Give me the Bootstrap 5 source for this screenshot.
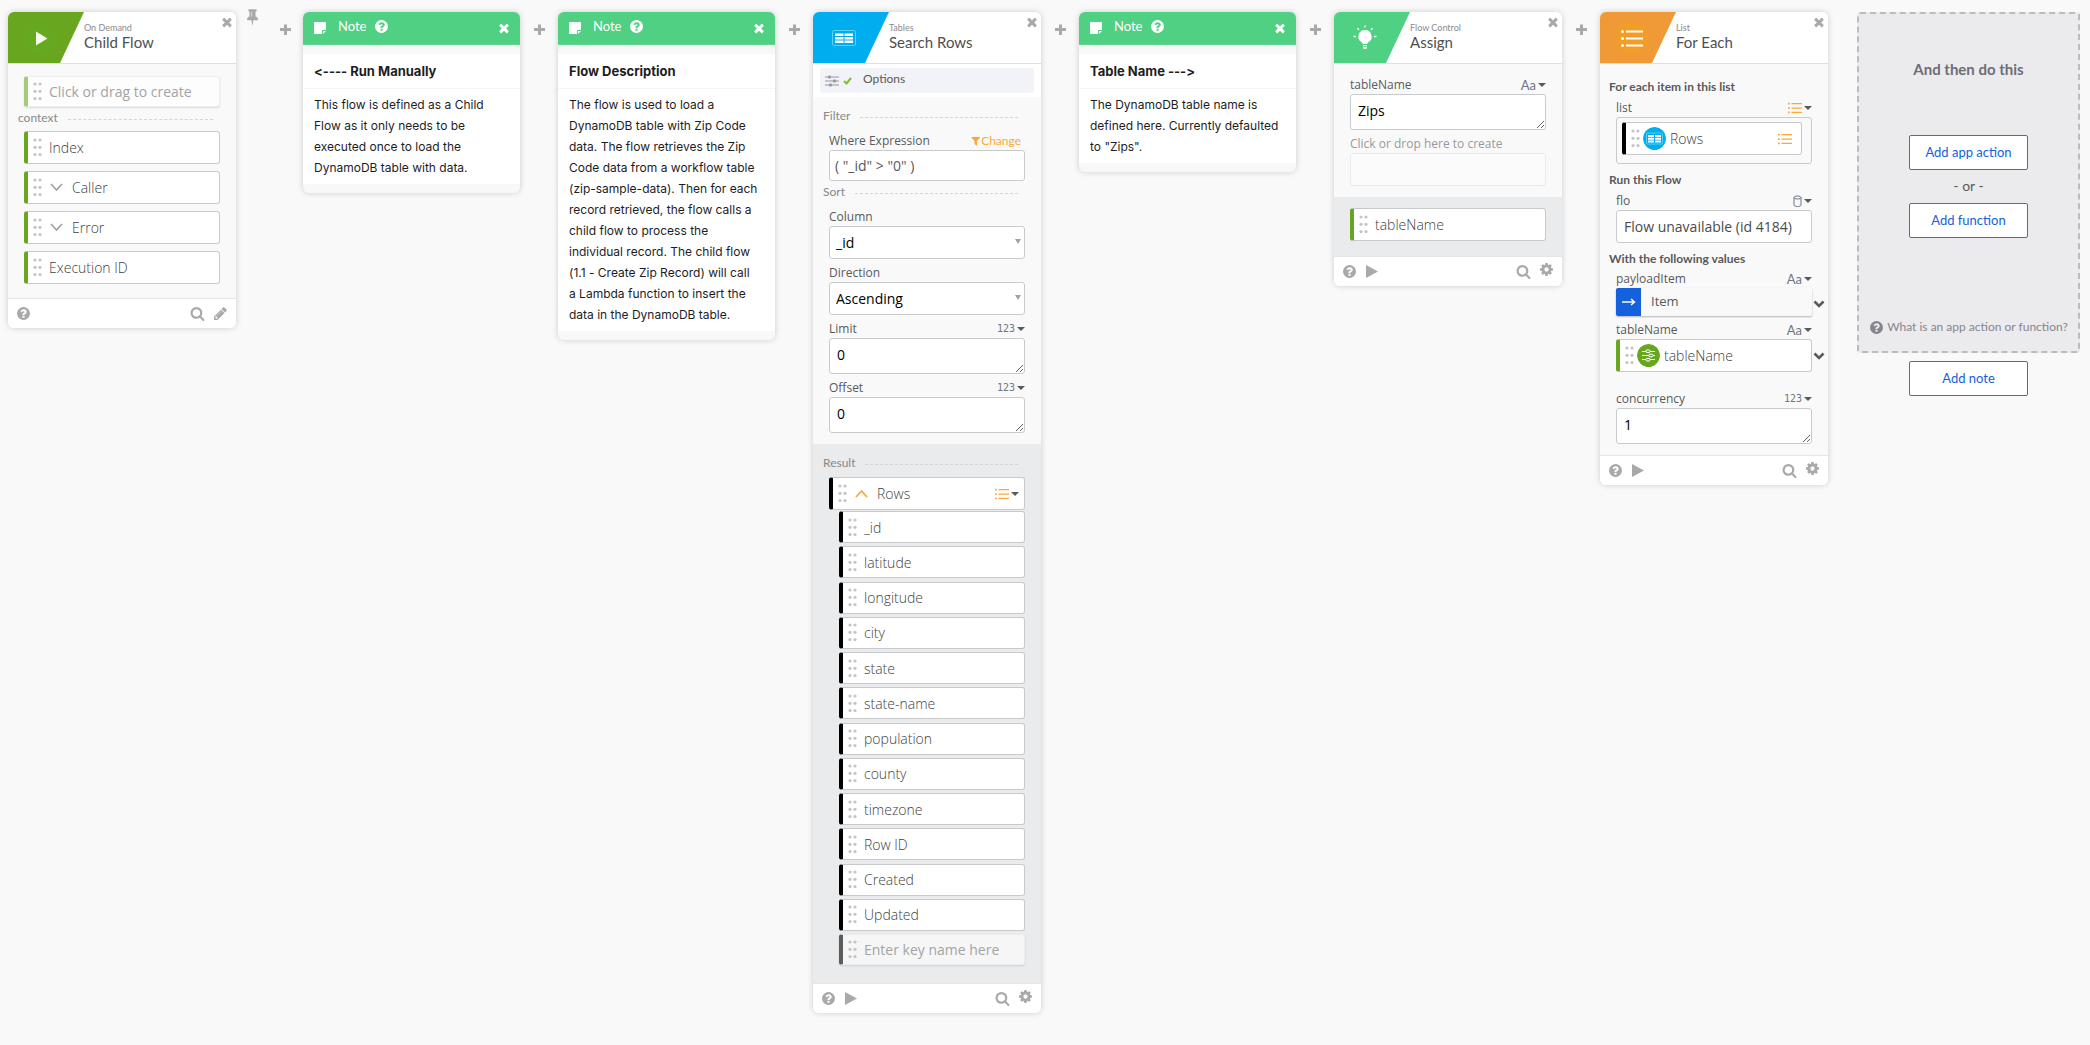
<!DOCTYPE html>
<html lang="en">
<head>
<meta charset="utf-8">
<meta name="viewport" content="width=device-width, initial-scale=1">
<title>Child Flow</title>
<link href="https://cdn.jsdelivr.net/npm/bootstrap@5.3.0/dist/css/bootstrap.min.css" rel="stylesheet">
<style>
:root { --head: Lato, "Open Sans", sans-serif; --text: "Open Sans", "Noto Sans", sans-serif; --note: Inter, "Liberation Sans", sans-serif; }
body { background: #f9f9f9; font-family: var(--text); font-size: 12px; color: #58595b; }
button { font-family: inherit; }
.board { padding: 12px 10px 32px 8px; min-width: 1900px; }
.step-card { flex: 228 1 0; min-width: 0; background: #f9f9f9; border-radius: 6px; box-shadow: 0 0 6px rgba(0,0,0,.18); overflow: hidden; }
.note-card { flex: 217 1 0; min-width: 0; background: #f8f8f8; border-radius: 6px; box-shadow: 0 0 6px rgba(0,0,0,.18); overflow: hidden; font-family: var(--note); font-variant-ligatures: none; font-feature-settings: "calt" 0; color: #1d1d1f; }
.joint { flex: 0 0 38px; padding-top: 10px; }
.joint-wide { flex: 0 0 67px; padding-right: 10px; }
.bare { border: 0; background: none; padding: 0; color: #a9a9a9; line-height: 0; }
.step-head { height: 52px; background: #fff; border-bottom: 1px solid #dedfe0; font-family: var(--head); }
.flag { flex: 0 0 76px; height: 51px; clip-path: polygon(0 0, 100% 0, 52px 100%, 0 100%); padding-right: 6px; }
.flag-green { background: #69a620; } .flag-blue { background: #00aeef; } .flag-mint { background: #4fd082; } .flag-orange { background: #f09a37; }
.names { padding-top: 10px; }
.shut { padding: 3px 2px; }
.kind { font-size: 9px; line-height: 12px; color: #8a8b8d; }
.title { font-size: 15px; line-height: 16px; margin: 0; font-weight: 400; color: #4e4f51; }
.step-foot { height: 30px; background: #fff; border-top: 1px solid #e4e5e6; padding: 0 8px; }
.sect { font-family: var(--head); font-size: 12px; line-height: 16px; color: #88898b; padding: 0 23px 0 10px; gap: 10px; }
.sect::after { content: ""; flex: 1; border-top: 1px dashed #d4d5d6; margin-top: 2px; }
.inset { padding-left: 16px; padding-right: 16px; }
.result { background: #e9ebed; }
.pill { height: 33px; background: #fff; border: 1px solid #c8c9cb; border-left: 4px solid #69a620; border-radius: 3px; font-size: 14px; font-weight: 300; color: #3e3f41; padding: 0 5px; gap: 6px; }
.pill-black { border-left-color: #000; }
.pill-row { height: 32px; }
.keys { height: 455px; padding-top: 1px; margin-left: 10px; }
.pill input { border: 0; background: none; outline: 0; min-width: 0; flex: 1; padding: 0; font: inherit; }
.pill input::placeholder { color: #a3a4a6; opacity: 1; font-weight: 400; }
.pill-new { height: 31px; background: #fdfdfd; border-color: #ededee; border-left-color: #a3cb79; box-shadow: 0 1px 2px rgba(0,0,0,.12); }
.pill-key { background: #f6f6f6; border-left-color: #5c5c5c; }
.dots { width: 10px; height: 19px; fill: #c4c5c7; flex: none; }
.lbl { height: 23px; padding-top: 5px; line-height: 18px; }
.lbl label { color: #58595b; }
.typ { font-family: var(--head); color: #6c7783; font-size: 13px; line-height: 14px; gap: 2px; }
.typ-num { font-family: "DejaVu Sans Mono", monospace; font-size: 10px; }
.typ::after, .pick::after { content: ""; border: 4px solid transparent; border-top-color: #58595b; border-bottom: 0; }
.box { display: block; width: 100%; height: 33px; border: 1px solid #c8cacc; border-radius: 3px; background: #fff; font-size: 14px; line-height: 20px; color: #000; padding: 0 7px; }
textarea.box { height: 36px; padding-top: 6px; resize: vertical; overflow: hidden; }
select.box { appearance: none; padding-left: 6px; }
.pick { position: relative; }
.pick::after { position: absolute; right: 4px; top: 13px; border-width: 5px 3px 0; border-top-color: #a0a1a3; }
.box-expr { height: 31px; color: #58595b; padding-left: 5px; }
.box-gray { color: #4a4b4d; }
.change { font-family: var(--head); font-size: 12px; line-height: 16px; color: #fba73b; }
.opts-wrap { background: #fff; padding: 4px 7px; height: 33px; }
.opts { background: #f1f3f8; border-radius: 3px; height: 25px; padding: 0 5px; width: 100%; font-family: var(--head); font-size: 12px; line-height: 14px; }
.opts span { color: #58595b; padding: 0 0 3px 11px; }
.each { font-family: var(--head); font-weight: 700; font-size: 12px; line-height: 16px; padding: 8px 9px 0; height: 23px; margin: 0; color: #58595b; }
.well { border: 1px solid #c8cacc; border-radius: 3px; height: 47px; padding: 4px 9px 0 5px; }
.disc { width: 23px; height: 23px; border-radius: 50%; flex: none; margin-left: -4px; margin-right: -2px; }
.item { height: 28px; box-shadow: 0 1px 2px rgba(0,0,0,.28); border-radius: 2px; font-size: 13px; background: #f9f9f9; }
.item span { background: #1560dc; width: 25px; height: 28px; border-radius: 2px 0 0 2px; margin-right: 10px; }
.with-more { margin-right: -13px; gap: 1px; }
.note-head { height: 33px; background: #4fd082; border-bottom: 1px solid #62d690; color: #fff; padding: 0 9px 0 11px; font-family: var(--head); font-size: 13px; line-height: 16px; }
.note-title { background: #fff; margin: 9px 0 0; height: 35px; border-bottom: 1px solid #f6f6f6; padding: 0 11px; font-size: 13px; line-height: 34px; font-weight: 700; }
.note-text { background: #fff; margin: 0 0 9px; padding: 5px 13px 6px 11px; font-size: 12px; line-height: 21px; }
.next-col { flex: 223 1 0; min-width: 0; margin-left: 29px; font-family: var(--head); }
.next { height: 341px; border: 2px dashed #bcbcbe; border-radius: 3px; background: #ebebed; padding: 45px 4px 16px; }
.next h2 { font-size: 15px; line-height: 20px; font-weight: 700; color: #6d6d78; margin: 0 0 56px; }
.btn-flow { width: 119px; height: 35px; background: #fff; border: 1px solid #2f72df; border-radius: 2px; color: #1560dc; font-size: 13px; line-height: 16px; padding: 0 0 2px; }
.btn-flow:hover { background: #1560dc; color: #fff; }
.or { font-size: 14px; line-height: 31px; padding-bottom: 2px; }
.ask { font-size: 12px; line-height: 16px; color: #85858f; text-decoration: none; gap: 3px; white-space: nowrap; }
.sym { width: 15px; height: 15px; fill: currentColor; flex: none; display: block; }
.sym-x { width: 14px; height: 14px; } .sym-pin { width: 17px; height: 17px; } .sym-note { width: 12px; height: 12px; }
</style>
<script src="https://cdn.jsdelivr.net/npm/bootstrap@5.3.0/dist/js/bootstrap.bundle.min.js"></script>
</head>
<body>
<svg class="d-none" aria-hidden="true">
<symbol id="i-x" viewBox="0 0 1792 1792"><path d="M1490 1322q0 40-28 68l-136 136q-28 28-68 28t-68-28l-294-294-294 294q-28 28-68 28t-68-28l-136-136q-28-28-28-68t28-68l294-294-294-294q-28-28-28-68t28-68l136-136q28-28 68-28t68 28l294 294 294-294q28-28 68-28t68 28l136 136q28 28 28 68t-28 68l-294 294 294 294q28 28 28 68z"/></symbol>
<symbol id="i-help" viewBox="0 0 1792 1792"><path d="M1024 1376v-192q0-14-9-23t-23-9h-192q-14 0-23 9t-9 23v192q0 14 9 23t23 9h192q14 0 23-9t9-23zm256-672q0-88-55.5-163t-138.5-116-170-41q-243 0-371 213-15 24 8 42l132 100q7 6 19 6 16 0 25-12 53-68 86-92 34-24 86-24 48 0 85.5 26t37.5 59q0 38-20 61t-68 45q-63 28-115.5 86.5t-52.5 125.5v36q0 14 9 23t23 9h192q14 0 23-9t9-23q0-19 21.5-49.5t54.5-49.5q32-18 49-28.5t46-35 44.5-48 28-60.5 12.5-81zm384 192q0 209-103 385.5t-279.5 279.5-385.5 103-385.5-103-279.5-279.5-103-385.5 103-385.5 279.5-279.5 385.5-103 385.5 103 279.5 279.5 103 385.5z"/></symbol>
<symbol id="i-cog" viewBox="0 0 1792 1792"><path d="M1152 896q0-106-75-181t-181-75-181 75-75 181 75 181 181 75 181-75 75-181zm512-109v222q0 12-8 23t-20 13l-185 28q-19 54-39 91 35 50 107 138 10 12 10 25t-9 23q-27 37-99 108t-94 71q-12 0-26-9l-138-108q-44 23-91 38-16 136-29 186-7 28-36 28h-222q-14 0-24.5-8.5t-11.5-21.5l-28-184q-49-16-90-37l-141 107q-10 9-25 9-14 0-25-11-126-114-165-168-7-10-7-23 0-12 8-23 15-21 51-66.5t54-70.5q-27-50-41-99l-183-27q-13-2-21-12.5t-8-23.5v-222q0-12 8-23t19-13l186-28q14-46 39-92-40-57-107-138-10-12-10-24 0-10 9-23 26-36 98.5-107.5t94.5-71.5q13 0 26 10l138 107q44-23 91-38 16-136 29-186 7-28 36-28h222q14 0 24.5 8.5t11.5 21.5l28 184q49 16 90 37l142-107q9-9 24-9 13 0 25 10 129 119 165 170 7 8 7 22 0 12-8 23-15 21-51 66.5t-54 70.5q26 50 41 98l183 28q13 2 21 12.5t8 23.5z"/></symbol>
<symbol id="i-search" viewBox="0 0 1792 1792"><path d="M1216 832q0-185-131.5-316.5t-316.5-131.5-316.5 131.5-131.5 316.5 131.5 316.5 316.5 131.5 316.5-131.5 131.5-316.5zm512 832q0 52-38 90t-90 38q-54 0-90-38l-343-342q-179 124-399 124-143 0-273.5-55.5t-225-150-150-225-55.5-273.5 55.5-273.5 150-225 225-150 273.5-55.5 273.5 55.5 225 150 150 225 55.5 273.5q0 220-124 399l343 343q37 37 37 90z"/></symbol>
<symbol id="i-pencil" viewBox="0 0 1792 1792"><path d="M491 1536l91-91-235-235-91 91v107h128v128h107zm523-928q0-22-22-22-10 0-17 7l-542 542q-7 7-7 17 0 22 22 22 10 0 17-7l542-542q7-7 7-17zm-54-192l416 416-832 832h-416v-416zm683 96q0 53-37 90l-166 166-416-416 166-165q36-38 90-38 53 0 91 38l235 234q37 39 37 91z"/></symbol>
<symbol id="i-pin" viewBox="0 0 1792 1792"><path d="M800 864v-448q0-14-9-23t-23-9-23 9-9 23v448q0 14 9 23t23 9 23-9 9-23zm672 352q0 26-19 45t-45 19h-429l-51 483q-2 12-10.500 20.500t-20.500 8.500h-1q-27 0-32-27l-76-485h-404q-26 0-45-19t-19-45q0-123 78.500-221.500t177.500-98.500v-512q-52 0-90-38t-38-90 38-90 90-38h640q52 0 90 38t38 90-38 90-90 38v512q99 0 177.500 98.500t78.500 221.500z"/></symbol>
<symbol id="i-plus" viewBox="0 0 15 15"><path d="M6 2.500h3V6h3.500a.5.5 0 0 1 .5.500v2a.5.5 0 0 1-.5.500H9v3.500a.5.5 0 0 1-.5.500h-2a.5.5 0 0 1-.5-.5V9H2.500a.5.5 0 0 1-.5-.5v-2a.5.5 0 0 1 .5-.5H6z"/></symbol>
<symbol id="i-play" viewBox="0 0 15 15"><path d="M1 1v13l12-6.500z"/></symbol>
<symbol id="i-dots" viewBox="0 0 10 19"><circle cx="2" cy="2" r="1.600"/><circle cx="7" cy="2" r="1.600"/><circle cx="2" cy="9.300" r="1.600"/><circle cx="7" cy="9.300" r="1.600"/><circle cx="2" cy="16.600" r="1.600"/><circle cx="7" cy="16.600" r="1.600"/></symbol>
<symbol id="i-note" viewBox="0 0 12 12"><path d="M.8 0h10.400a.8.8 0 0 1 .8.800V8H9.300A1.300 1.300 0 0 0 8 9.300V12H.8a.8.8 0 0 1-.8-.8V.8A.8.8 0 0 1 .8 0zM9 12V9.500a.5.5 0 0 1 .5-.5H12z"/></symbol>
<symbol id="i-list" viewBox="0 0 14 12"><path d="M3.500 1H14v1.300H3.500zM3.500 5.400H14v1.300H3.500zM3.500 9.800H14v1.300H3.500zM0 .800h1.700v1.700H0zM0 5.200h1.700v1.700H0zM0 9.600h1.700v1.700H0z"/></symbol>
<symbol id="i-table" viewBox="0 0 24 16"><rect x=".5" y=".5" width="23" height="15" rx="1.500" fill="none" stroke="#5fd0fa"/><path d="M3 3.500h8.500V6H3zM12.500 3.500H21V6h-8.500zM3 7h8.500v2.500H3zM12.500 7H21v2.500h-8.500zM3 10.500h8.500V13H3zM12.500 10.500H21V13h-8.500z" fill="#fff"/></symbol>
<symbol id="i-sliders" viewBox="0 0 14 12"><path d="M0 1.500h14v1H0zM0 5.500h14v1H0zM0 9.500h14v1H0z"/><rect x="3" y=".5" width="3" height="3" rx="1"/><rect x="8" y="4.500" width="3" height="3" rx="1"/><rect x="4" y="8.500" width="3" height="3" rx="1"/></symbol>
<symbol id="i-more" viewBox="0 0 12 8"><path d="M1.500 1.500 6 6l4.500-4.500" fill="none" stroke="#58595b" stroke-width="2.600"/></symbol>
</svg>

<main class="board d-flex align-items-start">

<section class="step-card">
  <header class="step-head d-flex">
    <div class="flag flag-green d-flex align-items-center justify-content-center"><svg width="34" height="34"><circle cx="14" cy="17" r="16" fill="#65aa1e"/><path d="M10 10.500v14l11.500-7z" fill="#f4fbea"/></svg></div>
    <div class="flex-grow-1 names"><div class="kind">On Demand</div><h2 class="title">Child Flow</h2></div>
    <div class="shut"><button class="bare" aria-label="Close"><svg class="sym sym-x"><use href="#i-x"/></svg></button></div>
  </header>
  <div class="inset" style="padding-top:12px">
    <div class="pill pill-new d-flex align-items-center"><svg class="dots"><use href="#i-dots"/></svg><input placeholder="Click or drag to create" aria-label="Click or drag to create"></div>
  </div>
  <div class="sect d-flex align-items-center" style="height:24px;padding-bottom:2px">context</div>
  <div class="inset d-flex flex-column" style="gap:7px;padding-bottom:14px">
    <div class="pill d-flex align-items-center"><svg class="dots"><use href="#i-dots"/></svg>Index</div>
    <div class="pill d-flex align-items-center"><svg class="dots"><use href="#i-dots"/></svg><svg width="17" height="9" fill="none" stroke="#a3a4a6" stroke-width="1.800"><path d="M2 1l5.500 6L13 1"/></svg>Caller</div>
    <div class="pill d-flex align-items-center"><svg class="dots"><use href="#i-dots"/></svg><svg width="17" height="9" fill="none" stroke="#a3a4a6" stroke-width="1.800"><path d="M2 1l5.500 6L13 1"/></svg>Error</div>
    <div class="pill d-flex align-items-center"><svg class="dots"><use href="#i-dots"/></svg>Execution ID</div>
  </div>
  <footer class="step-foot d-flex align-items-center">
    <button class="bare" aria-label="Help"><svg class="sym"><use href="#i-help"/></svg></button>
    <button class="bare ms-auto me-2" aria-label="Search"><svg class="sym"><use href="#i-search"/></svg></button>
    <button class="bare" aria-label="Edit"><svg class="sym"><use href="#i-pencil"/></svg></button>
  </footer>
</section>

<div class="joint joint-wide d-flex justify-content-between ps-2">
  <button class="bare mb-auto" style="margin-top:-14px" aria-label="Pin"><svg class="sym sym-pin"><use href="#i-pin"/></svg></button>
  <button class="bare" aria-label="Add step"><svg class="sym"><use href="#i-plus"/></svg></button>
</div>

<section class="note-card">
  <header class="note-head d-flex align-items-center"><svg class="sym sym-note"><use href="#i-note"/></svg><span class="ms-2 ps-1 pb-1">Note</span><button class="bare text-white ms-2 pb-1" aria-label="Help"><svg class="sym"><use href="#i-help"/></svg></button><button class="bare text-white ms-auto" aria-label="Close"><svg class="sym sym-x"><use href="#i-x"/></svg></button></header>
  <h3 class="note-title">&lt;---- Run Manually</h3>
  <p class="note-text">This flow is defined as a Child Flow as it only needs to be executed once to load the DynamoDB table with data.</p>
</section>

<div class="joint text-center"><button class="bare" aria-label="Add step"><svg class="sym"><use href="#i-plus"/></svg></button></div>

<section class="note-card">
  <header class="note-head d-flex align-items-center"><svg class="sym sym-note"><use href="#i-note"/></svg><span class="ms-2 ps-1 pb-1">Note</span><button class="bare text-white ms-2 pb-1" aria-label="Help"><svg class="sym"><use href="#i-help"/></svg></button><button class="bare text-white ms-auto" aria-label="Close"><svg class="sym sym-x"><use href="#i-x"/></svg></button></header>
  <h3 class="note-title">Flow Description</h3>
  <p class="note-text">The flow is used to load a DynamoDB table with Zip Code data. The flow retrieves the Zip Code data from a workflow table (zip-sample-data). Then for each record retrieved, the flow calls a child flow to process the individual record. The child flow (1.1 - Create Zip Record) will call a&nbsp;Lambda function to insert the data in the DynamoDB table.</p>
</section>

<div class="joint text-center"><button class="bare" aria-label="Add step"><svg class="sym"><use href="#i-plus"/></svg></button></div>

<section class="step-card">
  <header class="step-head d-flex">
    <div class="flag flag-blue d-flex align-items-center justify-content-center"><svg width="24" height="16" class="me-2"><use href="#i-table"/></svg></div>
    <div class="flex-grow-1 names"><div class="kind">Tables</div><h2 class="title">Search Rows</h2></div>
    <div class="shut"><button class="bare" aria-label="Close"><svg class="sym sym-x"><use href="#i-x"/></svg></button></div>
  </header>
  <div class="opts-wrap"><button class="bare opts d-flex align-items-center"><svg width="14" height="12" fill="#97989a"><use href="#i-sliders"/></svg><svg width="9" height="8" class="ms-1" fill="none" stroke="#7cc12e" stroke-width="2"><path d="M1 4l2.500 2.500L8 1"/></svg><span>Options</span></button></div>
  <div class="sect d-flex align-items-center" style="height:30px;padding-top:8px">Filter</div>
  <div class="inset">
    <div class="lbl d-flex justify-content-between"><label for="where">Where Expression</label><button class="bare change d-flex align-items-center me-1"><svg width="10" height="9" fill="#fba73b"><path d="M0 0h9.500L6 4v5L3.500 7V4z"/></svg>Change</button></div>
    <input id="where" class="box box-expr" value='( "_id" &gt; "0" )'>
  </div>
  <div class="sect d-flex align-items-center" style="height:22px">Sort</div>
  <div class="inset" style="padding-bottom:11px">
    <div class="lbl"><label for="col">Column</label></div>
    <div class="pick"><select id="col" class="box"><option>_id</option></select></div>
    <div class="lbl"><label for="dir">Direction</label></div>
    <div class="pick"><select id="dir" class="box"><option>Ascending</option><option>Descending</option></select></div>
    <div class="lbl d-flex justify-content-between"><label for="lim">Limit</label><button class="bare typ typ-num d-flex align-items-center">123</button></div>
    <textarea id="lim" class="box" rows="1">0</textarea>
    <div class="lbl d-flex justify-content-between"><label for="off">Offset</label><button class="bare typ typ-num d-flex align-items-center">123</button></div>
    <textarea id="off" class="box" rows="1">0</textarea>
  </div>
  <div class="result" style="padding-bottom:18px">
    <div class="sect d-flex align-items-center" style="height:33px;padding-top:5px">Result</div>
    <div class="inset">
      <div class="pill pill-black d-flex align-items-center"><svg class="dots"><use href="#i-dots"/></svg><svg width="17" height="9" fill="none" stroke="#fba73b" stroke-width="1.800"><path d="M2 8l5.500-6L13 8"/></svg>Rows<button class="bare typ d-flex align-items-center ms-auto" aria-label="List type"><svg width="14" height="12" fill="#fba73b"><use href="#i-list"/></svg></button></div>
      <div class="keys d-flex flex-column justify-content-between">
        <div class="pill pill-row pill-black d-flex align-items-center"><svg class="dots"><use href="#i-dots"/></svg>_id</div>
        <div class="pill pill-row pill-black d-flex align-items-center"><svg class="dots"><use href="#i-dots"/></svg>latitude</div>
        <div class="pill pill-row pill-black d-flex align-items-center"><svg class="dots"><use href="#i-dots"/></svg>longitude</div>
        <div class="pill pill-row pill-black d-flex align-items-center"><svg class="dots"><use href="#i-dots"/></svg>city</div>
        <div class="pill pill-row pill-black d-flex align-items-center"><svg class="dots"><use href="#i-dots"/></svg>state</div>
        <div class="pill pill-row pill-black d-flex align-items-center"><svg class="dots"><use href="#i-dots"/></svg>state-name</div>
        <div class="pill pill-row pill-black d-flex align-items-center"><svg class="dots"><use href="#i-dots"/></svg>population</div>
        <div class="pill pill-row pill-black d-flex align-items-center"><svg class="dots"><use href="#i-dots"/></svg>county</div>
        <div class="pill pill-row pill-black d-flex align-items-center"><svg class="dots"><use href="#i-dots"/></svg>timezone</div>
        <div class="pill pill-row pill-black d-flex align-items-center"><svg class="dots"><use href="#i-dots"/></svg>Row ID</div>
        <div class="pill pill-row pill-black d-flex align-items-center"><svg class="dots"><use href="#i-dots"/></svg>Created</div>
        <div class="pill pill-row pill-black d-flex align-items-center"><svg class="dots"><use href="#i-dots"/></svg>Updated</div>
        <div class="pill pill-new pill-key d-flex align-items-center"><svg class="dots"><use href="#i-dots"/></svg><input placeholder="Enter key name here" aria-label="Enter key name here"></div>
      </div>
    </div>
  </div>
  <footer class="step-foot d-flex align-items-center">
    <button class="bare me-2" aria-label="Help"><svg class="sym"><use href="#i-help"/></svg></button><button class="bare" aria-label="Run"><svg class="sym"><use href="#i-play"/></svg></button>
    <button class="bare ms-auto me-2" aria-label="Search"><svg class="sym"><use href="#i-search"/></svg></button><button class="bare pb-1" aria-label="Settings"><svg class="sym"><use href="#i-cog"/></svg></button>
  </footer>
</section>

<div class="joint text-center"><button class="bare" aria-label="Add step"><svg class="sym"><use href="#i-plus"/></svg></button></div>

<section class="note-card">
  <header class="note-head d-flex align-items-center"><svg class="sym sym-note"><use href="#i-note"/></svg><span class="ms-2 ps-1 pb-1">Note</span><button class="bare text-white ms-2 pb-1" aria-label="Help"><svg class="sym"><use href="#i-help"/></svg></button><button class="bare text-white ms-auto" aria-label="Close"><svg class="sym sym-x"><use href="#i-x"/></svg></button></header>
  <h3 class="note-title">Table Name ---&gt;</h3>
  <p class="note-text">The DynamoDB table name is defined here. Currently defaulted to "Zips".</p>
</section>

<div class="joint text-center"><button class="bare" aria-label="Add step"><svg class="sym"><use href="#i-plus"/></svg></button></div>

<section class="step-card">
  <header class="step-head d-flex">
    <div class="flag flag-mint d-flex align-items-center justify-content-center"><svg width="24" height="25" class="me-2"><g fill="#fff"><path d="M12 5a6.500 6.500 0 0 0-3.600 12c.9.700 1.300 1.300 1.400 2h4.400c.1-.7.500-1.300 1.400-2A6.500 6.500 0 0 0 12 5z"/><path d="M10 20h4v1.200h-4zM10 22h4v1.200l-1.200.800h-1.600L10 23.200z"/></g><path d="M12 .5v2M4.500 3l1.500 2M19.500 3L18 5M.5 11.500h2.500M21 11.500h2.500" stroke="#fff" stroke-width="1.300"/></svg></div>
    <div class="flex-grow-1 names"><div class="kind">Flow Control</div><h2 class="title">Assign</h2></div>
    <div class="shut"><button class="bare" aria-label="Close"><svg class="sym sym-x"><use href="#i-x"/></svg></button></div>
  </header>
  <div class="inset" style="padding-top:7px;padding-bottom:11px">
    <div class="lbl d-flex justify-content-between"><label for="tn">tableName</label><button class="bare typ d-flex align-items-center">Aa</button></div>
    <textarea id="tn" class="box" rows="1">Zips</textarea>
    <div class="lbl"><label for="mk" style="color:#98999b">Click or drop here to create</label></div>
    <input id="mk" class="box" style="background:#fbfbfb;border-color:#e9eaea">
  </div>
  <div class="result inset" style="padding-top:11px;padding-bottom:15px"><div class="pill d-flex align-items-center"><svg class="dots"><use href="#i-dots"/></svg>tableName</div></div>
  <footer class="step-foot d-flex align-items-center">
    <button class="bare me-2" aria-label="Help"><svg class="sym"><use href="#i-help"/></svg></button><button class="bare" aria-label="Run"><svg class="sym"><use href="#i-play"/></svg></button>
    <button class="bare ms-auto me-2" aria-label="Search"><svg class="sym"><use href="#i-search"/></svg></button><button class="bare pb-1" aria-label="Settings"><svg class="sym"><use href="#i-cog"/></svg></button>
  </footer>
</section>

<div class="joint text-center"><button class="bare" aria-label="Add step"><svg class="sym"><use href="#i-plus"/></svg></button></div>

<section class="step-card">
  <header class="step-head d-flex">
    <div class="flag flag-orange d-flex align-items-center justify-content-center"><svg width="34" height="34"><circle cx="14" cy="17" r="16" fill="#f39c26"/><g fill="#fff"><path d="M8 9.500h17v2H8zM8 16.500h17v2H8zM8 23.500h17v2H8z"/><circle cx="4.500" cy="10.500" r="1.500"/><circle cx="4.500" cy="17.500" r="1.500"/><circle cx="4.500" cy="24.500" r="1.500"/></g></svg></div>
    <div class="flex-grow-1 names"><div class="kind">List</div><h2 class="title">For Each</h2></div>
    <div class="shut"><button class="bare" aria-label="Close"><svg class="sym sym-x"><use href="#i-x"/></svg></button></div>
  </header>
  <h3 class="each" style="margin-top:7px">For each item in this list</h3>
  <div class="inset">
    <div class="lbl d-flex justify-content-between"><span>list</span><button class="bare typ d-flex align-items-center" aria-label="List type"><svg width="14" height="12" fill="#fba73b"><use href="#i-list"/></svg></button></div>
    <div class="well"><div class="pill pill-black d-flex align-items-center"><svg class="dots"><use href="#i-dots"/></svg><svg class="disc" viewBox="0 0 23 23"><circle cx="11.500" cy="11.500" r="11.500" fill="#00aeef"/><rect x="3.500" y="6" width="16" height="11" rx="1" fill="none" stroke="#7fd8fa" stroke-width=".7"/><path d="M5 8h6v2H5zM12 8h6v2h-6zM5 10.800h6v2H5zM12 10.800h6v2h-6zM5 13.600h6v2H5zM12 13.600h6v2h-6z" fill="#fff"/></svg>Rows<svg width="14" height="12" fill="#fba73b" class="ms-auto me-1"><use href="#i-list"/></svg></div></div>
  </div>
  <h3 class="each">Run this Flow</h3>
  <div class="inset">
    <div class="lbl d-flex justify-content-between"><label for="flo">flo</label><button class="bare typ d-flex align-items-center" aria-label="Record type"><svg width="9" height="12" fill="none" stroke="#6c7783"><ellipse cx="4.500" cy="2.500" rx="3.500" ry="1.500"/><path d="M1 2.500V10c0 2 7 2 7 0V2.500"/></svg></button></div>
    <input id="flo" class="box box-gray" value="Flow unavailable (id 4184)">
  </div>
  <h3 class="each" style="height:22px">With the following values</h3>
  <div class="inset" style="padding-bottom:11px">
    <div class="lbl d-flex justify-content-between"><span>payloadItem</span><button class="bare typ d-flex align-items-center">Aa</button></div>
    <div class="with-more d-flex align-items-center"><div class="item d-flex align-items-center flex-grow-1"><span class="d-flex align-items-center justify-content-center"><svg width="14" height="8" fill="none" stroke="#fff" stroke-width="1.500"><path d="M0 4h12M9 1l3.500 3L9 7"/></svg></span>Item</div><button class="bare pt-1" aria-label="More"><svg width="12" height="8"><use href="#i-more"/></svg></button></div>
    <div class="lbl d-flex justify-content-between"><span>tableName</span><button class="bare typ d-flex align-items-center">Aa</button></div>
    <div class="with-more d-flex align-items-center"><div class="pill d-flex align-items-center flex-grow-1"><svg class="dots"><use href="#i-dots"/></svg><svg class="disc" viewBox="0 0 23 23"><circle cx="11.500" cy="11.500" r="11.500" fill="#69a620"/><path d="M5 7.500h13M5 11.500h13M5 15.500h13" stroke="#fff" stroke-width="1.100"/><g fill="#69a620" stroke="#fff"><rect x="9" y="6" width="4" height="2.600" rx="1"/><rect x="12" y="10.200" width="4" height="2.600" rx="1"/><rect x="9" y="14.400" width="4" height="2.600" rx="1"/></g></svg>tableName</div><button class="bare" aria-label="More"><svg width="12" height="8"><use href="#i-more"/></svg></button></div>
    <div class="lbl d-flex justify-content-between" style="margin-top:13px"><label for="conc">concurrency</label><button class="bare typ typ-num d-flex align-items-center">123</button></div>
    <textarea id="conc" class="box" rows="1">1</textarea>
  </div>
  <footer class="step-foot d-flex align-items-center">
    <button class="bare me-2" aria-label="Help"><svg class="sym"><use href="#i-help"/></svg></button><button class="bare" aria-label="Run"><svg class="sym"><use href="#i-play"/></svg></button>
    <button class="bare ms-auto me-2" aria-label="Search"><svg class="sym"><use href="#i-search"/></svg></button><button class="bare pb-1" aria-label="Settings"><svg class="sym"><use href="#i-cog"/></svg></button>
  </footer>
</section>

<div class="next-col d-flex flex-column align-items-center">
  <section class="next d-flex flex-column align-items-center w-100">
    <h2>And then do this</h2>
    <button class="btn btn-flow">Add app action</button>
    <div class="or">- or -</div>
    <button class="btn btn-flow">Add function</button>
    <a class="ask d-flex align-items-center mt-auto" href="#"><svg class="sym"><use href="#i-help"/></svg>What is an app action or function?</a>
  </section>
  <button class="btn btn-flow mt-2">Add note</button>
</div>

</main>
</body>
</html>
